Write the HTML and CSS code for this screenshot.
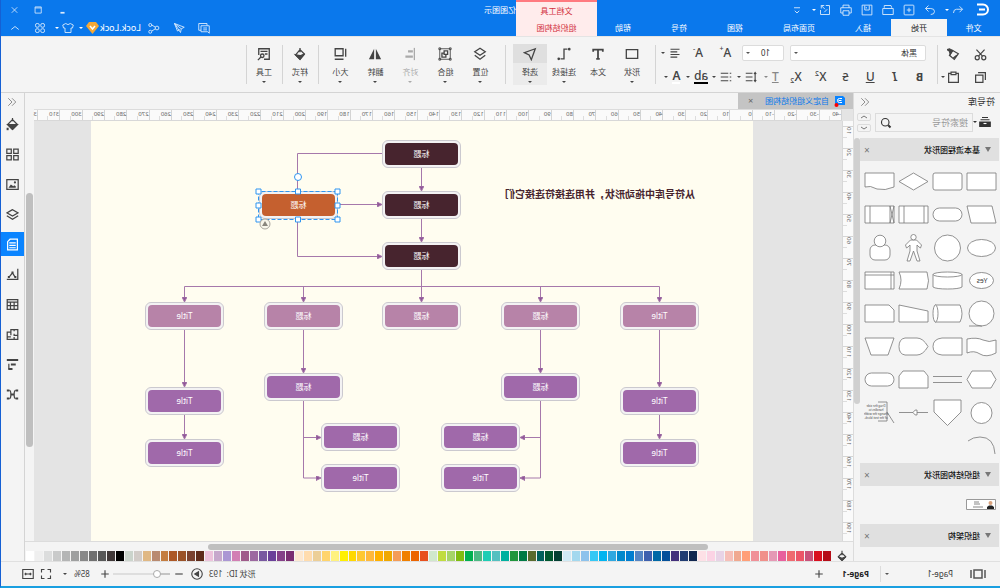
FILE: index.html
```html
<!DOCTYPE html>
<html lang="zh-CN">
<head>
<meta charset="utf-8">
<title>亿图图示</title>
<link rel="stylesheet" href="styles.css">
</head>
<body>
<div class="window">
  <header class="header">
    <div class="header-left">
      <div class="quick">
        <svg class="logo" viewBox="0 0 13 13"><path d="M12 1.500H6A5 5 0 0 0 6 11.500H12M4 6.500H10"/></svg>
        <button class="qb undo" aria-label="撤销"><svg class="ic" viewBox="0 0 16 16"><path d="M6 3L2 7l4 4M2 7h8q4 0 4 5"/></svg><i class="caret"></i></button>
        <button class="qb" aria-label="重做"><svg class="ic" viewBox="0 0 16 16"><path d="M10 2l4 4-4 4M14 6H7Q2 6 2 10t5 4"/></svg></button>
        <button class="qb" aria-label="新建"><svg class="ic" viewBox="0 0 16 16"><rect x="1.500" y="1.500" width="13" height="13" rx="1"/><path d="M8 5v6M5 8h6"/></svg></button>
        <button class="qb" aria-label="打开"><svg class="ic" viewBox="0 0 16 16"><path d="M3 5l1-3h9v3M1 6h14v8H1z"/></svg></button>
        <button class="qb" aria-label="保存"><svg class="ic" viewBox="0 0 16 16"><path d="M1.500 1.500h13v13h-13zM5 2v6h6V2M9 4v2"/></svg></button>
        <button class="qb" aria-label="打印"><svg class="ic" viewBox="0 0 16 16"><path d="M4 5V1.500h8V5M4 12H1V5h14v7h-3M4 9h8v6H4z"/></svg></button>
        <button class="qb" aria-label="导出"><svg class="ic" viewBox="0 0 16 16"><path d="M7 2H2v12h12V8M5 7l4 4M9 2h4v4M13 2L8 7"/></svg><i class="caret"></i></button>
        <button class="qb more" aria-label="更多"><svg class="ic" viewBox="0 0 16 16"><path d="M4 5h8M5 9l3 3 3-3"/></svg></button>
      </div>
      <nav class="tabs">
        <button class="tab file">文件</button><button class="tab active">开始</button><button class="tab">插入</button><button class="tab">页面布局</button><button class="tab">视图</button><button class="tab">符号</button><button class="tab">帮助</button>
      </nav>
    </div>
    <div class="context"><span>文档工具</span><button>组织结构图</button></div>
    <div class="header-right">
      <div class="title-row">
        <span class="title">亿图图示</span>
        <div class="controls">
          <button aria-label="最小化"><svg class="ic" viewBox="0 0 16 16"><path class="thick" d="M5 12h6"/></svg></button>
          <button aria-label="最大化"><svg class="ic" viewBox="0 0 16 16"><path d="M4 3.500h9v9H4zM4 5h9"/></svg></button>
          <button aria-label="关闭"><svg class="ic" viewBox="0 0 16 16"><path d="M4 4l8 8M12 4l-8 8"/></svg></button>
        </div>
      </div>
      <div class="account">
        <button aria-label="评论"><svg class="ic" viewBox="0 0 16 16"><path d="M4 5V2h11v9h-3M1 5h11v8H3l-2 2zM4 8h5M4 10.500h5"/></svg></button>
        <button aria-label="发送"><svg class="ic" viewBox="0 0 16 16"><path d="M14 2L1 7l4 2 1 5zM14 2L5 9M14 2l-4 10-3-2"/></svg></button>
        <button aria-label="分享"><svg class="ic" viewBox="0 0 16 16"><circle cx="4" cy="8" r="2.500"/><circle cx="13" cy="4" r="2"/><circle cx="13" cy="13" r="2"/><path d="M6 7l5-3M6 9l5 3"/></svg></button>
        <button class="user">Lock.Lock<svg class="gem" viewBox="0 0 13 12"><path d="M3 0h7l3 4-6.500 8L0 4z" fill="#f5a836"/><path d="M4 4l2.500 3L9 4" fill="none" stroke="#fff" stroke-width="1.500"/></svg><i class="caret"></i></button>
        <button class="skin" aria-label="皮肤"><svg class="ic" viewBox="0 0 16 16"><path d="M5 2L1 4l1 4h2v6h8V8h2l1-4-4-2q-3 3-6 0z"/></svg><i class="caret"></i></button>
        <button aria-label="应用"><svg class="ic" viewBox="0 0 16 16"><rect x="2" y="2" width="5" height="5" rx="2"/><rect x="9" y="2" width="5" height="5" rx="2"/><rect x="2" y="9" width="5" height="5" rx="2"/><rect x="9" y="9" width="5" height="5" rx="2"/></svg></button>
        <button class="fold" aria-label="折叠"><svg class="ic" viewBox="0 0 16 16"><path d="M3 10l5-4 5 4"/></svg></button>
      </div>
    </div>
  </header>

  <div class="ribbon">
    <div class="clip">
      <button aria-label="剪切"><svg class="ic" viewBox="0 0 16 16"><circle cx="4" cy="12" r="2.500"/><circle cx="12" cy="12" r="2.500"/><path d="M3 2l7.500 8M13 2L5.500 10"/></svg></button>
      <button aria-label="格式刷"><svg class="ic" viewBox="0 0 16 16"><path d="M2 7l7-4 4 6-6 5zM4 9l5 4" /><path d="M9 3l3 5 1-4 3-2-3-1z" fill="currentColor"/></svg></button>
      <button aria-label="复制"><svg class="ic" viewBox="0 0 16 16"><path d="M5 5h9v9H5zM2 11V2h9"/></svg></button>
      <button class="paste" aria-label="粘贴"><svg class="ic" viewBox="0 0 16 16"><path d="M5 3H2v11h12V3h-3M5 1.500h6v3H5z"/></svg><i class="caret"></i></button>
    </div>
    <div class="font-group">
      <div class="font-row">
        <label class="drop family"><select aria-label="字体"><option>黑体</option></select></label>
        <label class="drop size"><select aria-label="字号"><option>10</option></select></label>
        <button class="glyph" aria-label="增大字号">A<sup>+</sup></button>
        <button class="glyph" aria-label="减小字号">A<sup>-</sup></button>
        <button aria-label="对齐"><svg class="ic" viewBox="0 0 16 16"><path d="M2 3h12M5 6.500h9M2 10h12M5 13.500h9"/></svg><i class="caret"></i></button>
      </div>
      <div class="font-tools">
        <button class="glyph b" aria-label="粗体">B</button>
        <button class="glyph i" aria-label="斜体">I</button>
        <button class="glyph u" aria-label="下划线">U</button>
        <button class="glyph s" aria-label="删除线">S</button>
        <button class="glyph" aria-label="上标">X<sup>2</sup></button>
        <button class="glyph" aria-label="下标">X<sub>2</sub></button>
        <button class="glyph dim" aria-label="文字方向"><u>T</u><i class="caret"></i></button>
        <button aria-label="行距"><svg class="ic" viewBox="0 0 16 16"><path d="M2.500 2v12M1 4l1.500-2L4 4M1 12l1.500 2L4 12M6 3h9M6 8h9M6 13h9"/></svg><i class="caret"></i></button>
        <button aria-label="项目符号"><svg class="ic" viewBox="0 0 16 16"><path d="M1 3h2M5 3h10M1 8h2M5 8h10M1 13h2M5 13h10"/></svg><i class="caret"></i></button>
        <button class="glyph hl" aria-label="突出显示"><span>ab</span><i class="caret"></i></button>
        <button class="glyph fc" aria-label="字体颜色"><span>A</span><i class="caret"></i></button>
      </div>
    </div>
    <div class="tools first">
      <button class="tool"><svg class="ic" viewBox="0 0 16 16"><path d="M1.500 3h13v10h-13z"/></svg><span>形状</span><i class="caret"></i></button>
      <button class="tool"><svg class="ic" viewBox="0 0 16 16"><path d="M2.500 5.500V3h11v2.500M8 3v11M6 13.500h4" stroke-width="2"/></svg><span>文本</span></button>
      <button class="tool"><svg class="ic" viewBox="0 0 16 16"><path d="M4 2.500h4v11h4"/><circle cx="2" cy="2.500" r=".8"/><circle cx="14" cy="13.500" r=".8"/></svg><span>连接线</span><i class="caret"></i></button>
      <button class="tool on"><svg class="ic" viewBox="0 0 16 16"><path d="M2 2l12.500 4.500L9 9l-2.500 5.500z"/></svg><span>选择</span><i class="caret"></i></button>
    </div>
    <div class="tools second">
      <button class="tool"><svg class="ic" viewBox="0 0 16 16"><path d="M8 1.500l6 4-6 4-6-4zM2 9.500l6 4.500 6-4.500"/></svg><span>位置</span><i class="caret"></i></button>
      <button class="tool"><svg class="ic" viewBox="0 0 16 16"><path d="M2 2h12v12H2z" stroke-width="1"/><path d="M5 4.500h4v4H5zM9 7h2.500v4.500H7V8.500"/><path d="M1 1h2v2H1zM13 1h2v2h-2zM1 13h2v2H1zM13 13h2v2h-2z" stroke-width="1"/></svg><span>组合</span><i class="caret"></i></button>
      <button class="tool off" disabled><svg class="ic" viewBox="0 0 16 16"><path d="M3 1v14"/><path d="M5.500 4.500h4v1h-4zM5.500 10.500h7v1h-7z" fill="currentColor"/></svg><span>对齐</span><i class="caret"></i></button>
      <button class="tool"><svg class="ic" viewBox="0 0 16 16"><path d="M7 2v12H1zM9 2v12h6z" fill="currentColor" stroke="none"/></svg><span>翻转</span><i class="caret"></i></button>
      <button class="tool"><svg class="ic" viewBox="0 0 16 16"><path d="M4.500 2h9v8h-9zM1.500 2v9M4 14h10"/></svg><span>大小</span><i class="caret"></i></button>
    </div>
    <div class="tools single">
      <button class="tool"><svg class="ic" viewBox="0 0 16 16"><path d="M3 8l5-5 5 6-5 5zM8 1v5"/><path d="M3 8l5 2 5-1-5 5z" fill="currentColor"/></svg><span>样式</span><i class="caret"></i></button>
    </div>
    <div class="tools single">
      <button class="tool"><svg class="ic" viewBox="0 0 16 16"><path d="M8 14H2V2h12v7M4 5h8M4 8h3"/><circle cx="10" cy="10" r="2"/><path d="M11.500 11.500L15 15"/></svg><span>工具</span><i class="caret"></i></button>
    </div>
  </div>

  <main class="main">
    <aside class="library">
      <div class="lib-head"><h2>符号库</h2><button aria-label="收起"><svg class="ic" viewBox="0 0 16 16"><path d="M8 2L2 8l6 6M14 2L8 8l6 6"/></svg></button></div>
      <div class="search-row">
        <button class="lib-menu" aria-label="库"><svg class="ic" viewBox="0 0 16 16"><path d="M4 2h8M2 5h12"/><path d="M1 8h14v6H1z" fill="currentColor"/><path d="M6 10h4" stroke="#fff"/></svg><i class="caret"></i></button>
        <label class="search"><input type="text" placeholder="搜索符号" aria-label="搜索符号"><svg class="ic" viewBox="0 0 16 16"><circle cx="7" cy="7" r="5"/><path class="thick" d="M11 11l3 3"/></svg></label>
        <div class="spin"><button aria-label="上一个"><svg viewBox="0 0 10 6"><path d="M2 4l3-2 3 2"/></svg></button><button aria-label="下一个"><svg viewBox="0 0 10 6"><path d="M2 2l3 2 3-2"/></svg></button></div>
      </div>
      <div class="lib-body">
        <div class="lib-list">
          <section>
            <h3><i></i>基本流程图形状<button aria-label="关闭基本流程图形状">×</button></h3>
            <div class="shapes">
              <svg viewBox="0 0 32 28"><path d="M2 5h29v17H2z"/></svg>
              <svg viewBox="0 0 32 28"><rect x="2" y="5" width="29" height="17" rx="2"/></svg>
              <svg viewBox="0 0 32 28"><path d="M2 13.500L16.500 5 31 13.500 16.500 22z"/></svg>
              <svg viewBox="0 0 32 28"><path d="M2 5h29v14q-5-2-12 2-8 2-17-2z"/></svg>
              <svg viewBox="0 0 32 28"><path d="M6 5h25l-4 17H2z"/></svg>
              <svg viewBox="0 0 32 28"><rect x="2" y="7" width="29" height="13" rx="6.500"/></svg>
              <svg viewBox="0 0 32 28"><path d="M2 5h29v17H2zM6 5v17M26 5v17"/></svg>
              <svg viewBox="0 0 32 28"><path d="M2 5h29v17H2zM6 5v17M26 5v17M2 5l4 17M6 5L2 22"/></svg>
              <svg viewBox="0 0 32 28"><ellipse cx="16.500" cy="14" rx="14" ry="8.500"/></svg>
              <svg viewBox="0 0 32 28"><circle cx="16.500" cy="14" r="13"/></svg>
              <svg viewBox="0 0 32 28"><path d="M16.500 6l-3 0-5 5 1 3 1.500-1 2-2v6l-3 10h3l3.500-10L20 27h3l-3-10v-6l2 2 1.500 1 1-3-5-5z"/><circle cx="16.500" cy="3.200" r="2.700"/></svg>
              <svg viewBox="0 0 32 28"><rect x="6" y="11" width="20" height="15" rx="5"/><circle cx="16" cy="7" r="5.800"/></svg>
              <svg viewBox="0 0 32 28"><ellipse cx="16.500" cy="13.500" rx="12" ry="8"/><text x="16" y="16">Yes</text></svg>
              <svg viewBox="0 0 32 28"><path d="M2 7v13q3 2 14.500 2T31 20V7"/><ellipse cx="16.500" cy="7.500" rx="14.500" ry="2.500"/></svg>
              <svg viewBox="0 0 32 28"><path d="M3 5h28q-4 8 0 17H3q-3-8 0-17z"/></svg>
              <svg viewBox="0 0 32 28"><path d="M2 5h29v17H2zM5 5v17M2 8h29"/></svg>
              <svg viewBox="0 0 32 28"><circle cx="16.500" cy="13.500" r="12.500"/><path d="M16 26h13"/></svg>
              <svg viewBox="0 0 32 28"><path d="M4 5h25v17H4q-4-8 0-17z"/><ellipse cx="28.500" cy="13.500" rx="2.500" ry="8.500"/></svg>
              <svg viewBox="0 0 32 28"><path d="M2 11l29-6v17H2z"/></svg>
              <svg viewBox="0 0 32 28"><path d="M7 5h24v17H2V10z"/></svg>
              <svg viewBox="0 0 32 28"><path d="M2 7q7 3 13 0t16-1v14q-7-3-13 1t-16-1z"/></svg>
              <svg viewBox="0 0 32 28"><path d="M2 5h20q9 1 9 8.500T22 22H2z"/></svg>
              <svg viewBox="0 0 32 28"><path d="M2 13.500Q7 5 13 5h12q6 1 6 8.500T25 22H13Q7 22 2 13.500z"/></svg>
              <svg viewBox="0 0 32 28"><path d="M2 5h29l-6 17H8z"/></svg>
              <svg viewBox="0 0 32 28"><path d="M7 5h19l5 8.500L26 22H7l-5-8.500z"/></svg>
              <svg viewBox="0 0 32 28"><path d="M2 10.500h29M2 16.500h29"/></svg>
              <svg viewBox="0 0 32 28"><path d="M6 5h21l4 5v12H2V10z"/></svg>
              <svg viewBox="0 0 32 28"><rect x="2" y="7" width="29" height="13" rx="6.500"/></svg>
              <svg viewBox="0 0 32 28"><circle cx="16.500" cy="14" r="10.500"/></svg>
              <svg viewBox="0 0 32 28"><path d="M3 1h27v12L16.500 26.500 3 13z"/></svg>
              <svg viewBox="0 0 32 28"><path d="M2 13.500h11M17 13.500h14M13 11v5q2 1 4-2.500-2-3.500-4-2.500z"/></svg>
              <svg viewBox="0 0 32 28"><path class="open" d="M18 3H9v19h9M9 13L2 24"/><g class="note"><text x="20" y="8">Drag the side</text><text x="20" y="12">handles to</text><text x="20" y="16">change the width</text><text x="20" y="20">of the text block.</text></g></svg>
              <svg viewBox="0 0 32 28"><path class="open" d="M3 22Q4 5 18 5q7 0 12 4"/></svg>
            </div>
          </section>
          <section>
            <h3><i></i>组织结构图形状<button aria-label="关闭组织结构图形状">×</button></h3>
            <div class="cards"><svg viewBox="0 0 30 11"><path d="M.5.5h29v10H.5z" fill="#fff" stroke="#999"/><path d="M2 10V8l2-1.500h3L9 8v2z" fill="#222"/><circle cx="5.500" cy="4" r="2" fill="#d9a27c"/><path d="M17 3h5M16 5h6M13 8h10" stroke="#888" fill="none"/></svg></div>
          </section>
          <section><h3><i></i>组织架构<button aria-label="关闭组织架构">×</button></h3></section>
        </div>
        <div class="lib-scroll"><i></i></div>
      </div>
    </aside>

    <div class="work">
      <div class="doc-tabs"><div class="doc-tab"><svg class="doc-ic" viewBox="0 0 12 12"><path d="M3 1h8v9H1V3z" fill="#0a84ff"/><path d="M4 3.500h2.500q2 0 2 2t-2 2H4M4.500 5.500h3" stroke="#fff" fill="none"/><circle cx="9.500" cy="10" r="2" fill="#f00"/></svg><span>自定义组织结构图</span><button aria-label="关闭文档">×</button></div></div>
      <div class="view">
        <div class="corner"></div>
        <div class="ruler-x" id="rulerX"></div>
        <div class="ruler-y" id="rulerY"></div>
        <div class="canvas">
          <div class="page">
            <svg class="links" viewBox="0 0 662 420" width="662" height="420">
              <defs><marker id="arrow" viewBox="0 0 5 5" refX="5" refY="2.500" markerWidth="5" markerHeight="5" orient="auto" markerUnits="userSpaceOnUse"><path d="M0 0l5 2.500L0 5z" fill="#8f5597"/></marker></defs>
              <g>
                <path d="M331.500 47v23M331.500 98v23M331.500 149v32M93.500 165.500V181M212.500 165.500V181M449.500 165.500V181M568.500 165.500V181"/>
                <path d="M455.500 98v37.500H371M415 83.500H371M93.500 209v57M568.500 209v57M93.500 294v24M568.500 294v24M212.500 209v43M449.500 209v43"/>
              </g>
              <g class="ends">
                <path d="M331.500 60v10"/><path d="M331.500 111v10"/><path d="M331.500 171v10"/><path d="M93.500 171v10"/><path d="M212.500 171v10"/><path d="M449.500 171v10"/><path d="M568.500 171v10"/>
                <path d="M381 135.500h-10"/><path d="M381 83.500h-10"/><path d="M93.500 256v10"/><path d="M568.500 256v10"/><path d="M93.500 308v10"/><path d="M568.500 308v10"/><path d="M212.500 242v10"/><path d="M449.500 242v10"/>
                <path d="M212.500 316.500H233"/><path d="M212.500 280v77H233"/><path d="M449.500 316.500H432"/><path d="M449.500 280v77H432"/>
              </g>
              <path d="M371 32.500h84.500V70M93.500 165.500h475"/>
            </svg>
            <p class="note-text">从符号库中拖动形状，并用连接符连接它们</p>
            <div id="nodes"></div>
            <svg class="selection" viewBox="0 0 90 54" width="90" height="54"><rect x="5.500" y="19.500" width="79" height="28" stroke-dasharray="4 2" fill="none"/><circle cx="45" cy="5" r="3.500"/><path d="M3 17h5v5H3zM42.500 17h5v5h-5zM82 17h5v5h-5zM3 31h5v5H3zM82 31h5v5h-5zM3 45h5v5H3zM42.500 45h5v5h-5zM82 45h5v5h-5z"/></svg>
            <svg class="badge" viewBox="0 0 12 12" width="12" height="12"><circle cx="6" cy="6" r="5" fill="#f8f6ea" stroke="#aaa79e"/><path d="M6 3l3 5H3z" fill="#89867d"/></svg>
          </div>
        </div>
        <div class="scroll-y"><i></i></div>
      </div>
      <div class="scroll-x"><i></i></div>
      <div class="palette"><button aria-label="填充"><svg class="ic" viewBox="0 0 16 16"><path d="M3 9l5-5 5 5-5 5zM8 1v6"/><path d="M3 9l5 2 5-2-5 5z" fill="currentColor"/></svg></button><div class="swatches" id="swatches"></div></div>
    </div>

    <aside class="rail">
      <button class="expand" aria-label="展开"><svg class="ic" viewBox="0 0 16 16"><path d="M8 2L2 8l6 6M14 2L8 8l6 6"/></svg></button>
      <button aria-label="填充样式"><svg class="ic" viewBox="0 0 16 16"><path d="M2 8l6-6 6 6-6 6zM8 0v4"/><path d="M2 8h12l-6 6z" fill="currentColor"/><path d="M14 12v3" class="thick"/></svg></button>
      <button aria-label="符号"><svg class="ic" viewBox="0 0 16 16"><path d="M1 1.500h5.500v5H1zM9.500 1.500H15v5H9.500zM1 9.500h5.500v5H1zM9.500 9.500H15v5H9.500z"/></svg></button>
      <button aria-label="图片"><svg class="ic" viewBox="0 0 16 16"><path d="M1 2h14v12H1z"/><path d="M4 12v-2l2-1 1 1 3-2 3 4z" fill="currentColor" stroke="none"/><circle cx="5" cy="5.500" r=".6"/></svg></button>
      <button aria-label="图层"><svg class="ic" viewBox="0 0 16 16"><path d="M8 2l7 4-7 4-7-4zM1 9.500l7 4.500 7-4.500"/></svg></button>
      <button class="on" aria-label="属性"><svg class="ic" viewBox="0 0 16 16"><path d="M2 1.500h9l3 3v10H2zM4 6h8M4 9h8M4 12h8"/></svg></button>
      <button aria-label="图表"><svg class="ic" viewBox="0 0 16 16"><path d="M1.500 1v13H15M5 11l3-5 4 5"/><path d="M7.500 5h1v1h-1zM4 10.500h1v1H4zM12 10.500h1v1h-1z"/></svg></button>
      <button aria-label="表格"><svg class="ic" viewBox="0 0 16 16"><path d="M1.500 2h13v12h-13zM1.500 5h13M1.500 9.500h13M6 5v9M10.500 5v9"/></svg></button>
      <button aria-label="平面图"><svg class="ic" viewBox="0 0 16 16"><path d="M1.500 2H10v3h4.500v9h-13zM1.500 9H6V7M6 14v-3M10 5v4M10 11h4M6 2v2"/></svg></button>
      <button aria-label="甘特图"><svg class="ic" viewBox="0 0 16 16"><path class="thick" d="M1 2.500h14M4 8h6M8 13.500h5"/><path d="M12.500 7v7"/></svg></button>
      <button aria-label="思维导图"><svg class="ic" viewBox="0 0 16 16"><path class="thick" d="M1 3h3M12 3h3M1 13h3M12 13h3M6 8h4"/><path d="M4 3q2 0 2 5t-2 5M12 3q-2 0-2 5t2 5"/></svg></button>
    </aside>
  </main>

  <footer class="status">
    <div class="pages">
      <button aria-label="页面视图"><svg class="view-ic" viewBox="0 0 16 12"><path d="M1 2v8M4 2h8v8H4zM15 2v8"/></svg></button>
      <label class="drop page-pick"><select aria-label="页面"><option>Page-1</option></select></label>
      <button class="page-tab">Page-1</button>
      <button class="plus" aria-label="添加页面"><svg class="ic" viewBox="0 0 16 16"><path d="M8 3v10M3 8h10"/></svg></button>
    </div>
    <div class="zoom">
      <span>形状 ID:&nbsp; 193</span>
      <button aria-label="演示"><svg class="ic play" viewBox="0 0 16 16"><circle cx="8" cy="8" r="7"/><path d="M6 5l5 3-5 3z" fill="currentColor"/></svg></button>
      <button aria-label="缩小"><svg class="ic" viewBox="0 0 16 16"><path d="M3 8h10"/></svg></button>
      <input type="range" aria-label="缩放" min="0" max="100" value="18">
      <button aria-label="放大"><svg class="ic" viewBox="0 0 16 16"><path d="M8 3v10M3 8h10"/></svg></button>
      <button class="percent">85%<i class="caret"></i></button>
      <button aria-label="全屏"><svg class="ic" viewBox="0 0 16 16"><path d="M2 6V2h4M10 2h4v4M14 10v4h-4M6 14H2v-4"/></svg></button>
      <button aria-label="适合宽度"><svg class="ic" viewBox="0 0 16 16"><path d="M1 2h14v12H1zM4 8h8M5.500 6.500L4 8l1.500 1.500M10.500 6.500L12 8l-1.500 1.500"/></svg></button>
    </div>
  </footer>
</div>
<script src="app.js"></script>
</body>
</html>
```
FILE: styles.css
```css
* { box-sizing: border-box; }
body { margin: 0; font-family: "Noto Sans", "Noto Sans CJK SC", sans-serif; font-size: 8px; line-height: 12px; color: #333; }
button { border: 0; padding: 0; margin: 0; background: none; font: inherit; color: inherit; display: inline-flex; align-items: center; justify-content: center; }
h2, h3, p { margin: 0; font-weight: 400; }
select, input { font: inherit; color: inherit; }
svg { flex: none; }
.window { height: 100vh; min-height: 400px; display: grid; grid-template-rows: 36px 57px minmax(0, 1fr) 25px; background: #f4f4f4; border-right: 1px solid #1560d4; border-bottom: 2px solid #1a9fe0; overflow: hidden; transform: scaleX(-1); }
.ic { width: 12px; height: 12px; fill: none; stroke: currentColor; stroke-width: 1.5; }
.thick { stroke-width: 2.5; }
.caret { width: 0; height: 0; flex: none; border: 2px solid transparent; border-top-color: currentColor; border-bottom: 0; }

.header { display: flex; background: #0a78ec; color: #fff; min-width: 0; }
.header .ic { stroke-width: 1.2; opacity: .85; }
.header-left { width: 403px; flex: none; display: grid; grid-template-rows: 19px 17px; }
.quick { display: flex; align-items: center; gap: 9px; padding-left: 11px; }
.logo { width: 13px; height: 13px; fill: none; stroke: #fff; stroke-width: 2; }
.undo { margin-left: 3px; }
.qb { gap: 3px; }
.tabs { display: flex; }
.tab { width: 56px; }
.tab:nth-child(4) { width: 72px; }
.tab.file { width: 53px; }
.tab.active { background: #f4f4f4; color: #222; }
.context { width: 81px; flex: none; display: grid; grid-template-rows: 17px 17px; justify-items: center; align-items: center; background: #ffecec; border-top: 2px solid #ff7a80; color: #d2303c; }
.header-right { flex: 1; display: grid; grid-template-rows: 19px 17px; min-width: 0; }
.title-row, .account { display: flex; justify-content: space-between; align-items: center; }
.controls { display: flex; gap: 13px; padding-right: 8px; }
.controls .ic { width: 11px; }
.account { justify-content: flex-end; gap: 13px; padding-right: 8px; }
.user { gap: 1px; margin: 0 -8px 0 -6px; font-size: 9px; }
.gem { width: 13px; height: 12px; }
.user .caret { margin-left: 2px; }
.skin { gap: 3px; margin-right: -4px; }

.ribbon { display: flex; align-items: center; border-top: 1px solid #e4e4e4; border-bottom: 1px solid #d4d4d4; color: #444; }
.clip { width: 63px; height: 39px; flex: none; display: grid; grid-template-columns: 14px 18px; grid-template-rows: 16px 23px; column-gap: 13px; justify-items: start; align-items: end; padding-left: 13px; border-right: 1px solid #d4d4d4; }
.clip button { height: 14px; }
.clip .ic { width: 13px; height: 13px; }
.clip .caret { margin-left: 2px; }
.font-group { width: 282px; height: 39px; flex: none; display: grid; grid-template-rows: 16px 23px; padding: 0 4px 0 5px; border-right: 1px solid #d4d4d4; }
.font-row { display: grid; grid-template-columns: 136px 42px 1fr 1fr 1fr; gap: 0 6px; padding-left: 6px; }
.font-row button { margin: 0 -3px; }
.font-tools { display: grid; grid-template-columns: repeat(11, 1fr); align-items: end; }
.font-tools button { height: 14px; }
.font-group .caret { margin-left: 4px; }
.drop { position: relative; display: block; }
.drop select { appearance: none; width: 100%; height: 16px; padding: 0 8px; border: 1px solid #dcdcdc; border-radius: 2px; background: #fff; color: #333; }
.drop.size select { padding-left: 13px; }
.drop::after { content: ""; position: absolute; right: 4px; top: 7px; border: 2px solid transparent; border-top-color: #555; border-bottom: 0; }
.glyph { font-size: 12px; line-height: 16px; font-weight: 500; }
.glyph sup, .glyph sub { font-size: 7px; line-height: 7px; }
.glyph sup { align-self: flex-start; }
.glyph sub { align-self: flex-end; }
.b { font-weight: 700; font-size: 11px; }
.i { font-style: italic; font-weight: 600; }
.u { text-decoration: underline; }
.s { text-decoration: line-through; font-size: 11px; }
.dim { color: #888; }
.hl span { border-bottom: 2px solid #000; line-height: 12px; }
.fc span { font-weight: 600; border-bottom: 2px solid #fff; line-height: 12px; }
.tools { display: flex; height: 41px; position: relative; }
.tools::after { content: ""; position: absolute; right: 0; top: 1px; height: 39px; width: 1px; background: #d4d4d4; }
.tool { width: 35px; height: 41px; display: grid; grid-template-rows: 19px 18px 3px; justify-items: center; align-items: center; }
.first { padding: 0 8px 0 6px; }
.first .tool { width: 34px; }
.second { padding: 0 5px 0 7px; }
.single .tool { width: 36px; }
.tool .ic { width: 14px; height: 14px; }
.tool .caret { align-self: start; }
.tool.on { background: linear-gradient(#dfdfdf 19px, #ebebeb 19px); }
.tool.off { color: #aaa; }

.main { display: grid; grid-template-columns: 147px minmax(0, 1fr) 24px; min-height: 0; }
.library { display: flex; flex-direction: column; min-height: 0; border-right: 1px solid #dcdcdc; }
.lib-head { display: flex; justify-content: space-between; align-items: center; height: 18px; padding: 0 6px 0 5px; }
.library h2 { font-size: 9px; }
.lib-head .ic { color: #888; width: 10px; height: 10px; }
.search-row { display: flex; height: 27px; padding-top: 2px; padding-left: 9px; }
.lib-menu { width: 18px; height: 18px; gap: 2px; }
.search { display: flex; align-items: center; width: 98px; height: 19px; padding-right: 4px; border: 1px solid #dcdcdc; }
.search input { width: 100%; min-width: 0; border: 0; padding: 0 4px; background: none; outline: 0; font-size: 9px; }
.search input::placeholder { color: #999; }
.search .ic { transform: scaleX(-1); }
.spin { display: grid; gap: 3px; height: 19px; margin-left: 4px; }
.spin button { width: 14px; height: 8px; border: 1px solid #dcdcdc; border-radius: 2px; }
.spin svg { width: 10px; height: 6px; fill: none; stroke: #777; }
.lib-body { flex: 1; display: flex; min-height: 0; }
.lib-list { flex: 1; overflow: hidden; margin-left: 1px; }
.lib-scroll { width: 6px; }
.lib-scroll i { display: block; height: 63%; border-radius: 3px; background: #d0d0d0; }
.library h3 { display: flex; align-items: center; height: 23px; padding: 0 4px 0 8px; background: #e0e0e0; color: #111; font-size: 8px; font-weight: 500; }
.library h3 i { border: 3px solid transparent; border-top: 5px solid #777; border-bottom: 0; margin-right: 5px; }
.library h3 button { margin-left: auto; font-size: 10px; font-weight: 400; color: #777; }
.shapes { display: grid; grid-template-columns: repeat(4, 34px); grid-auto-rows: 33px; justify-items: center; align-items: center; padding: 4px 0 1px; }
.shapes svg { width: 32px; height: 28px; fill: #fff; stroke: #777; stroke-width: .8; }
.shapes text { font-size: 7px; text-anchor: middle; fill: #444; stroke: none; }
.shapes .note text { font-size: 3px; }
.shapes .open { fill: none; }
.cards { height: 38px; padding: 13px 3px; }
.cards svg { width: 30px; height: 11px; display: block; }

.work { display: grid; grid-template-rows: 16px minmax(0, 1fr) 10px 10px; min-height: 0; }
.doc-tab { width: 115px; height: 16px; display: flex; align-items: center; padding: 0 10px 0 7px; gap: 5px; background: #c4c4c4; color: #0a78ec; }
.doc-ic { width: 12px; height: 12px; }
.doc-tab button { margin-left: auto; color: #666; font-size: 9px; }
.view { display: grid; grid-template-columns: 11px minmax(0, 1fr) 9px; grid-template-rows: 12px minmax(0, 1fr); min-height: 0; overflow: hidden; }
.corner { background: #e4e4e4; }
.ruler-x { display: grid; grid-template-columns: repeat(36, minmax(0, 1fr)) 4px; border-top: 1px solid #dcdcdc; border-bottom: 1px solid #d8d8d8; background: #fafafa; font-size: 6px; line-height: 8px; color: #666; }
.ruler-x span { border-left: 1px solid #d4d4d4; background: linear-gradient(#ddd, #ddd) 11px 6px / 1px 4px no-repeat; }
.ruler-x span:last-child { background: none; }
.ruler-y { grid-column: 1; grid-row: 2; padding-top: 5px; background: #fafafa; border-right: 1px solid #d8d8d8; overflow: hidden; font-size: 6px; line-height: 8px; color: #666; }
.ruler-y span { display: block; height: 22px; width: 10px; border-top: 1px solid #d4d4d4; background: linear-gradient(#ddd, #ddd) 6px 10px / 4px 1px no-repeat; }
.ruler-y b { display: block; font-weight: 400; height: 18px; writing-mode: vertical-rl; transform: rotate(180deg); text-align: right; }
.canvas { grid-column: 2; grid-row: 2; min-width: 0; background: #e4e4e4; overflow: hidden; padding: 0 57px 0 89px; }
.page { position: relative; height: 100%; background: #fffdf0; }
.links { position: absolute; left: 0; top: 0; fill: none; stroke: #a678ab; stroke-width: 1; }
.ends path { marker-end: url(#arrow); }
.note-text { position: absolute; left: 58px; top: 64px; font-size: 10px; line-height: 18px; font-weight: 700; color: #47242e; white-space: nowrap; }
.node { position: absolute; width: 79px; height: 28px; padding: 2px; border: 1px solid #cbc9cf; border-radius: 6px; background: #f3f2f3; color: #fff; }
.node span { display: flex; height: 22px; align-items: center; justify-content: center; border-radius: 4px; }
.dark span { background: #47242e; }
.accent span { background: #c5602f; }
.pink span { background: #b783a8; }
.violet span { background: #a069aa; }
.selection { position: absolute; left: 410px; top: 51px; fill: #fff; stroke: #2f95f0; stroke-width: 1; }
.badge { position: absolute; left: 482px; top: 97px; }
.scroll-y { grid-column: 3; grid-row: 2; background: #f4f4f4; padding: 72px 1px 0; }
.scroll-y i { display: block; height: 254px; border-radius: 4px; background: #bfbfbf; }
.scroll-x { padding: 2px 0 1px; border-top: 1px solid #dcdcdc; }
.scroll-x i { display: block; height: 6px; width: 500px; margin-left: 145px; border-radius: 3px; background: #bfbfbf; }
.palette { display: flex; color: #444; }
.palette button { width: 22px; }
.swatches { flex: 1; display: flex; }
.swatches i { flex: 1; border-right: 1px solid #f4f4f4; }

.rail { display: flex; flex-direction: column; border-left: 1px solid #d4d4d4; color: #444; }
.rail button { height: 24px; margin-bottom: 6px; }
.rail .expand { height: 18px; margin-bottom: 1px; color: #888; }
.rail .ic { width: 13px; height: 13px; }
.rail .expand .ic { width: 10px; height: 10px; }
.rail .on { background: #0a84ff; color: #fff; }

.status { display: flex; justify-content: space-between; align-items: center; border-top: 1px solid #e0e0e0; color: #444; }
.pages, .zoom { display: flex; align-items: center; }
.pages { padding-left: 14px; }
.view-ic { width: 16px; height: 12px; fill: none; stroke: #555; stroke-width: 1.5; }
.page-pick { width: 81px; margin-left: 9px; border-right: 1px solid #dcdcdc; margin-right: 11px; }
.page-pick select { border: 0; background: none; }
.page-tab { font-weight: 700; color: #222; }
.plus { margin-left: 17px; }
.zoom { gap: 6px; padding-right: 21px; }
.zoom input { appearance: none; width: 57px; height: 10px; margin: 0 -4px 0 -3px; background: linear-gradient(to right, #c4c4c4 18%, #dedede 18%) center / 100% 2px no-repeat; }
.zoom input::-webkit-slider-thumb { appearance: none; width: 8px; height: 8px; border: 1px solid #aaa; border-radius: 50%; background: #fff; }
.percent { gap: 7px; padding: 0 5px 0 3px; }
```
FILE: app.js
```js
const rulerX = document.getElementById("rulerX");
for (let mm = -40; mm <= 310; mm += 10) {
  const s = document.createElement("span");
  s.textContent = mm;
  rulerX.append(s);
}
const last = document.createElement("span");
last.textContent = "3";
rulerX.append(last);

const rulerY = document.getElementById("rulerY");
for (let mm = 10; mm <= 190; mm += 10) {
  const s = document.createElement("span");
  const b = document.createElement("b");
  b.textContent = mm;
  s.append(b);
  rulerY.append(s);
}

const nodes = [
  [292, 19, "dark", "标题"], [292, 70, "dark", "标题"], [292, 121, "dark", "标题"],
  [415, 70, "accent", "标题"],
  [54, 181, "pink", "Title"], [173, 181, "pink", "标题"], [292, 181, "pink", "标题"], [410, 181, "pink", "标题"], [529, 181, "pink", "Title"],
  [173, 252, "violet", "标题"], [410, 252, "violet", "标题"],
  [54, 266, "violet", "Title"], [529, 266, "violet", "Title"],
  [54, 318, "violet", "Title"], [529, 318, "violet", "Title"],
  [233, 302, "violet", "标题"], [353, 302, "violet", "标题"],
  [233, 343, "violet", "Title"], [353, 343, "violet", "Title"]
];
const layer = document.getElementById("nodes");
for (const [x, y, kind, label] of nodes) {
  const d = document.createElement("div");
  d.className = "node " + kind;
  d.style.left = x + "px";
  d.style.top = y + "px";
  const s = document.createElement("span");
  s.textContent = label;
  d.append(s);
  layer.append(d);
}

const colors = "b50d18 d9101f c9527a ec5568 ef6a70 e8609d e599b5 f0908a f09098 ff9f78 f0a990 f6bfb8 e8d3e6 fbd3e4 fde0e6 10264f 213c72 43307c 05509a 0068a6 3e60ae 5585c4 007dd0 0088cc 2fa8e0 00b4f0 35c8f5 8dc2ec a3d8ee cfeaf5 033f33 00572f 00605c 5a6b2e 007a45 1f963c 00b0a0 55c0c0 1ecdb5 4cb984 00b050 80bc10 a6d468 c0dc40 d0e8cc e8501e ec6400 f08000 f49c58 f0a800 ffb000 ffb83c ffc832 ffd800 fff000 fff27f ffd46c eccf98 ffdcae fde8d0 7b2d72 854088 6a4099 7858a0 9c68a0 9f5b8a d27fb4 ab97d4 c7a8cc edc3dc 5f2c1b 7a4230 9a5228 ad5826 c47d40 b98a70 e0b884 d2ccc8 cbd4cc 000000 403838 585858 707070 888888 9fa0a0 b4b5b5 c9caca dcdddd efefef ffffff".split(" ");
const swatches = document.getElementById("swatches");
for (const c of colors) {
  const i = document.createElement("i");
  i.style.background = "#" + c;
  swatches.append(i);
}
```
